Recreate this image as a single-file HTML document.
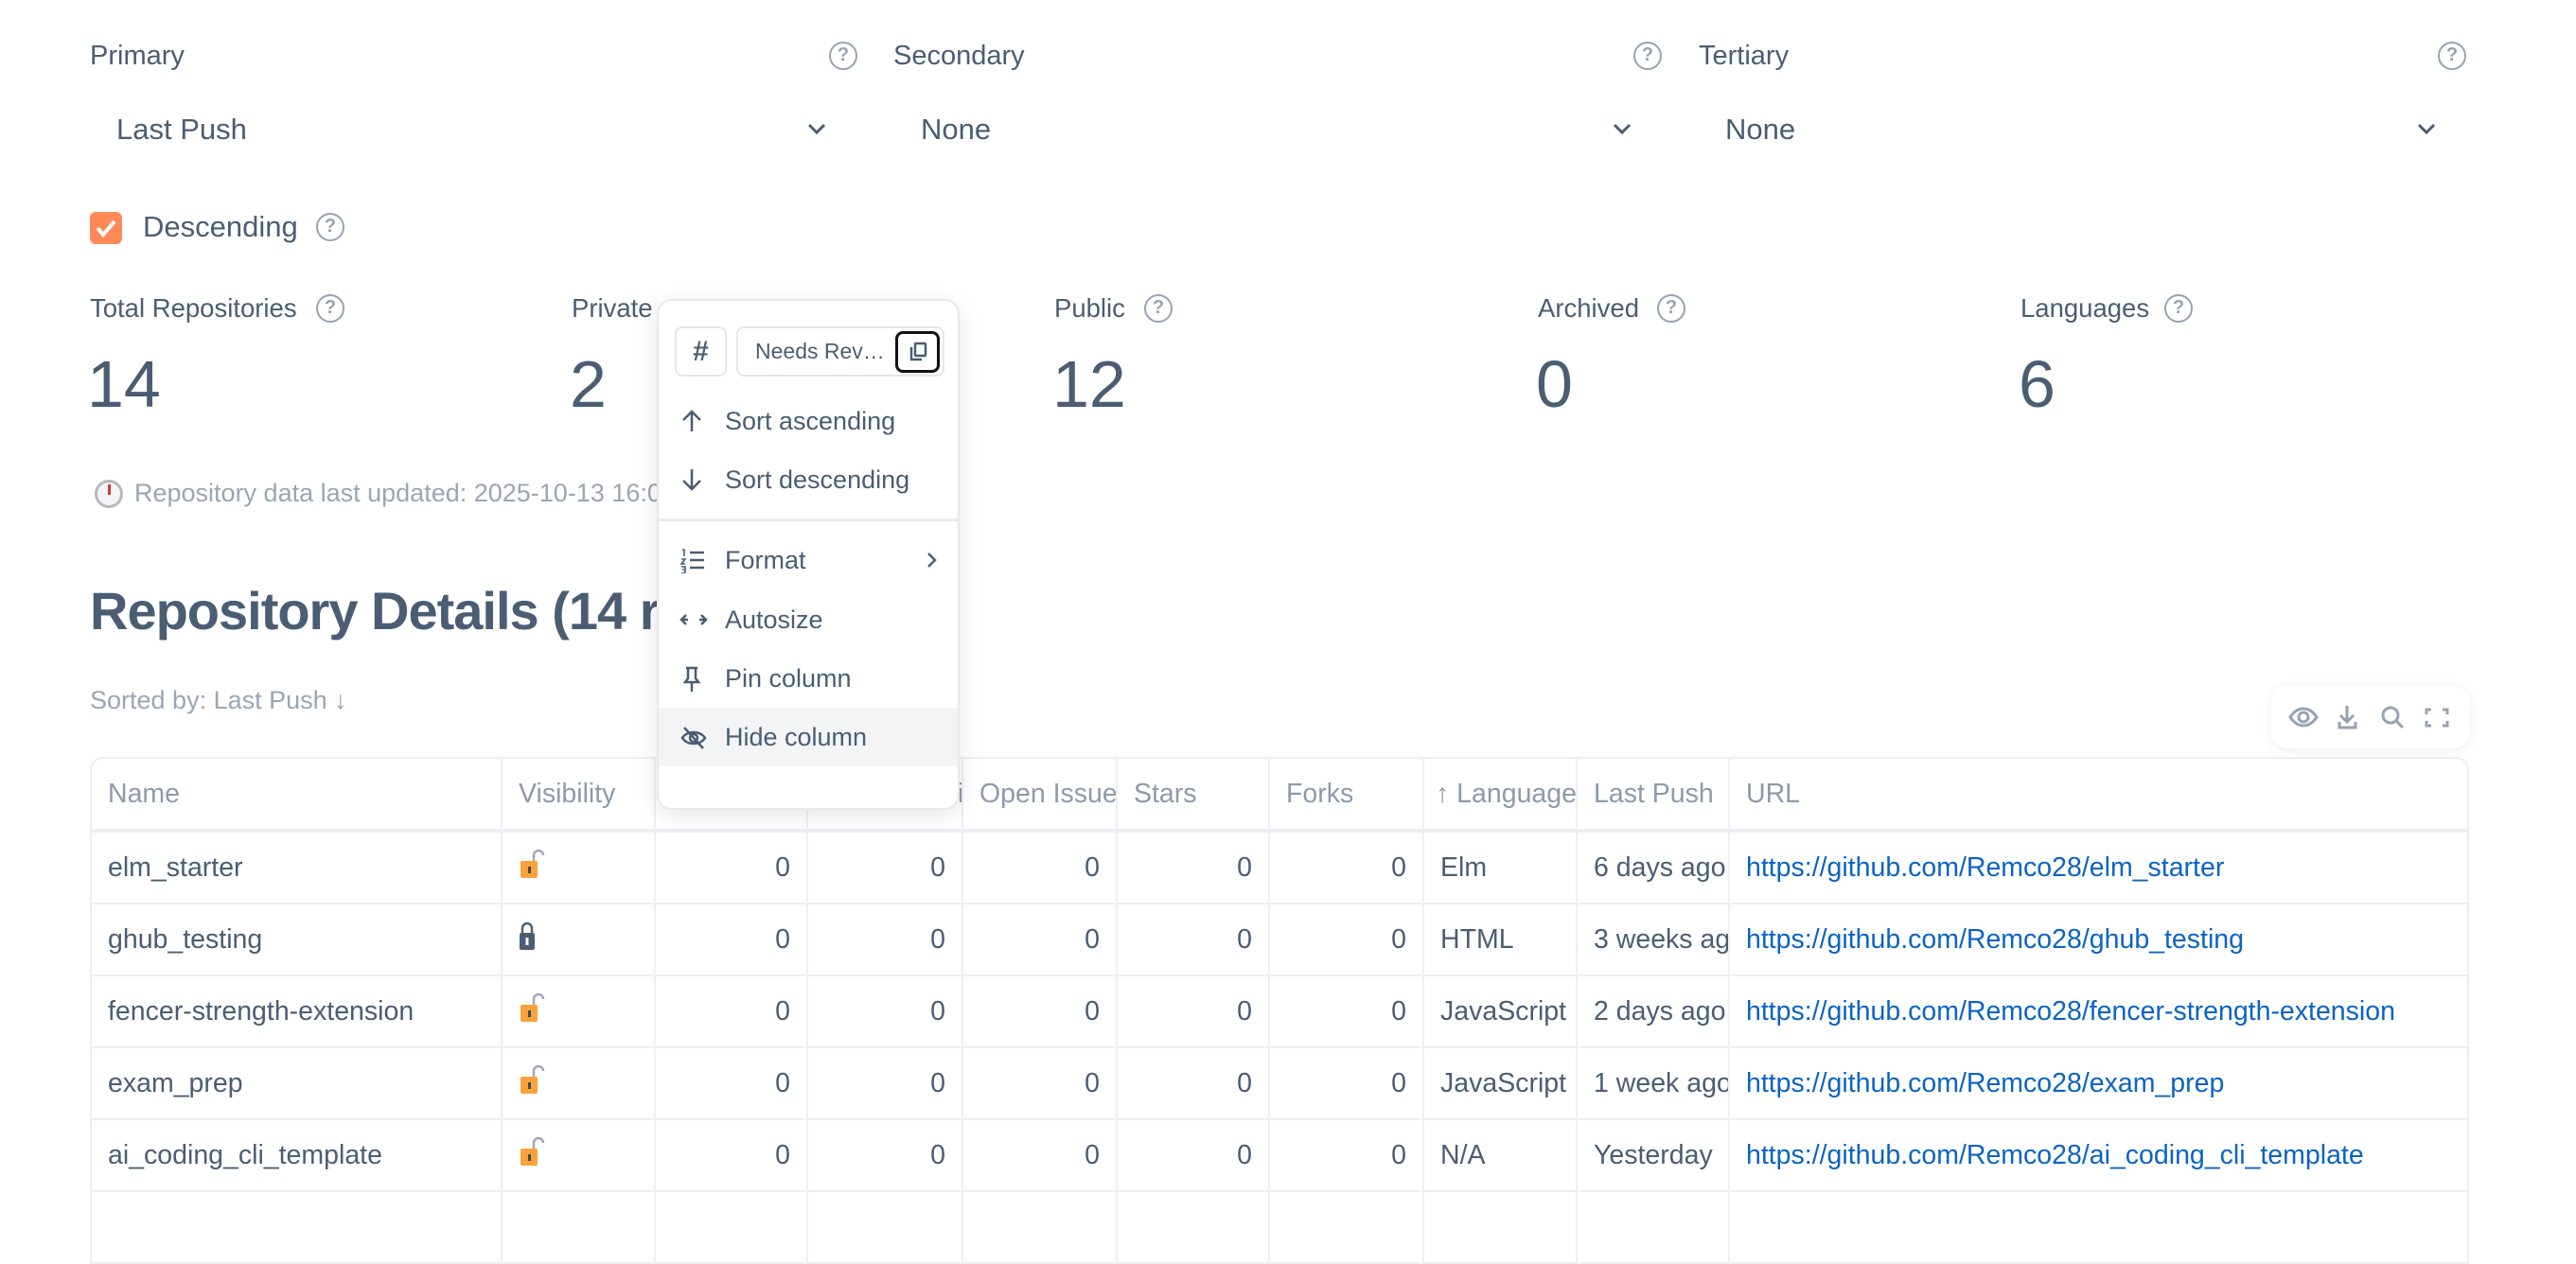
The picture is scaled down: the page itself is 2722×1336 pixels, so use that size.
<!DOCTYPE html>
<html><head><meta charset="utf-8">
<style>
*{box-sizing:border-box;margin:0;padding:0}
body{width:2722px;height:1266px;overflow:hidden;background:#fff;font-family:"Liberation Sans",sans-serif;color:#4b5d73;position:relative}
.a{position:absolute;white-space:nowrap}
.lbl{font-size:29px;line-height:34px;color:#4b5d73}
.sel{font-size:31px;line-height:40px;color:#4b5d73}
.help{position:absolute;width:30px;height:30px;border:2.5px solid #97a3b2;border-radius:50%;color:#97a3b2;font-size:20px;font-weight:bold;text-align:center;line-height:25px}
.statl{font-size:27.5px;line-height:34px;color:#4b5d73}
.statn{font-size:70px;line-height:80px;color:#4b5d73}
table{position:absolute;left:95px;top:800px;border-collapse:separate;border-spacing:0;table-layout:fixed;width:2514px;border:2px solid #eceef1;border-radius:14px 14px 0 0;border-bottom:none;font-size:28.5px}
td,th{border-right:2px solid #eef0f3;border-bottom:2px solid #eceef1;padding:0 17px;height:76px;white-space:nowrap;overflow:hidden;text-align:left;font-weight:normal;color:#4b5d73}
th{height:78px;color:#8d9aab;border-bottom:4px solid #eceef1}
td:last-child,th:last-child{border-right:none}
td.n{text-align:right}
td a{color:#0b63c5;text-decoration:none}
.menu{position:absolute;left:694px;top:316px;width:320px;height:540px;background:#fff;border:2px solid #e6e9ed;border-radius:16px;box-shadow:0 6px 24px rgba(0,0,0,.10);overflow:hidden}
.mi{position:absolute;left:0;width:100%;height:62px;font-size:27px;line-height:62px;color:#4b5d73}
.mi span{position:absolute;left:70px}
.mi svg{position:absolute;left:22px;top:17px}
</style></head><body>

<div class="a lbl" style="left:95px;top:42px">Primary</div>
<div class="help" style="left:876px;top:44px">?</div>
<div class="a sel" style="left:123px;top:117px">Last Push</div>
<svg class="a" style="left:852px;top:128px" width="22" height="16" viewBox="0 0 22 16"><path d="M3 4l8 8 8-8" fill="none" stroke="#4b5d73" stroke-width="3"/></svg>

<div class="a lbl" style="left:944px;top:42px">Secondary</div>
<div class="help" style="left:1726px;top:44px">?</div>
<div class="a sel" style="left:973px;top:117px">None</div>
<svg class="a" style="left:1703px;top:128px" width="22" height="16" viewBox="0 0 22 16"><path d="M3 4l8 8 8-8" fill="none" stroke="#4b5d73" stroke-width="3"/></svg>

<div class="a lbl" style="left:1795px;top:42px">Tertiary</div>
<div class="help" style="left:2576px;top:44px">?</div>
<div class="a sel" style="left:1823px;top:117px">None</div>
<svg class="a" style="left:2553px;top:128px" width="22" height="16" viewBox="0 0 22 16"><path d="M3 4l8 8 8-8" fill="none" stroke="#4b5d73" stroke-width="3"/></svg>

<div class="a" style="left:95px;top:224px;width:34px;height:34px;background:#ff8a57;border-radius:6px"></div>
<svg class="a" style="left:95px;top:224px" width="34" height="34"><path d="M8 17l6 7 12-14" fill="none" stroke="#fff" stroke-width="4"/></svg>
<div class="a sel" style="left:151px;top:220px">Descending</div>
<div class="help" style="left:334px;top:225px">?</div>

<div class="a statl" style="left:95px;top:309px">Total Repositories</div>
<div class="help" style="left:334px;top:311px">?</div>
<div class="a statn" style="left:92px;top:366px">14</div>
<div class="a statl" style="left:604px;top:309px">Private</div>
<div class="a statn" style="left:602px;top:366px">2</div>
<div class="a statl" style="left:1114px;top:309px">Public</div>
<div class="help" style="left:1209px;top:311px">?</div>
<div class="a statn" style="left:1112px;top:366px">12</div>
<div class="a statl" style="left:1625px;top:309px">Archived</div>
<div class="help" style="left:1751px;top:311px">?</div>
<div class="a statn" style="left:1623px;top:366px">0</div>
<div class="a statl" style="left:2135px;top:309px">Languages</div>
<div class="help" style="left:2287px;top:311px">?</div>
<div class="a statn" style="left:2133px;top:366px">6</div>

<div class="a" style="left:100px;top:507px;width:30px;height:30px;border:3px solid #b9b9bd;border-radius:50%;background:#f4f4f6"></div>
<div class="a" style="left:114px;top:512px;width:3px;height:11px;background:#d03a3a"></div>
<div class="a" style="left:142px;top:504px;font-size:27px;line-height:34px;color:#9aa5b4">Repository data last updated: 2025-10-13 16:00</div>

<div class="a" style="left:95px;top:612px;font-size:56px;line-height:68px;font-weight:bold;color:#4b5d73;letter-spacing:-1px">Repository Details (14 repositories)</div>
<div class="a" style="left:95px;top:724px;font-size:27px;line-height:32px;color:#9aa5b4">Sorted by: Last Push ↓</div>

<div class="a" style="left:2400px;top:725px;width:210px;height:66px;background:#fff;border-radius:18px;box-shadow:0 2px 12px rgba(0,0,0,.08)"></div>
<svg class="a" style="left:2400px;top:725px" width="210" height="66" viewBox="0 0 210 66" fill="none" stroke="#97a3b2" stroke-width="3">
<path d="M20 33c8-12 20-12 28 0c-8 12-20 12-28 0z"/><circle cx="34" cy="33" r="5"/>
<path d="M80 21v16M73 31l7 7 7-7M72 38v6h17v-6"/>
<circle cx="126" cy="31" r="8"/><path d="M132 37l7 7"/>
<path d="M169 25h-5v5M181 25h5v5M169 42h-5v-5M181 42h5v-5"/>
</svg>

<table>
<colgroup><col style="width:434px"><col style="width:162px"><col style="width:161px"><col style="width:164px"><col style="width:163px"><col style="width:161px"><col style="width:163px"><col style="width:162px"><col style="width:161px"><col></colgroup>
<tr><th>Name</th><th>Visibility</th><th>Stars</th><th>Needs Review</th><th>Open Issues</th><th>Stars</th><th>Forks</th><th style="padding-left:12px">↑ Language</th><th>Last Push</th><th>URL</th></tr>
<tr><td>elm_starter</td><td><svg width="30" height="32" viewBox="0 0 30 32"><path d="M16 14V7a5 5 0 0 1 10 0" fill="none" stroke="#a8a4b8" stroke-width="2.5"/><rect x="2" y="13" width="18" height="18" rx="2" fill="#f7a23a"/><rect x="10" y="19" width="3" height="7" fill="#3d4a5c"/></svg></td><td class="n">0</td><td class="n">0</td><td class="n">0</td><td class="n">0</td><td class="n">0</td><td>Elm</td><td>6 days ago</td><td><a>https://github.com/Remco28/elm_starter</a></td></tr>
<tr><td>ghub_testing</td><td><svg width="30" height="32" viewBox="0 0 30 32"><path d="M4 14V8a5 5 0 0 1 10 0v6" fill="none" stroke="#4b5d73" stroke-width="2.5"/><rect x="1" y="13" width="16" height="18" rx="2" fill="#4b5d73"/><rect x="7.5" y="18" width="3" height="8" fill="#fff"/></svg></td><td class="n">0</td><td class="n">0</td><td class="n">0</td><td class="n">0</td><td class="n">0</td><td>HTML</td><td>3 weeks ago</td><td><a>https://github.com/Remco28/ghub_testing</a></td></tr>
<tr><td>fencer-strength-extension</td><td><svg width="30" height="32" viewBox="0 0 30 32"><path d="M16 14V7a5 5 0 0 1 10 0" fill="none" stroke="#a8a4b8" stroke-width="2.5"/><rect x="2" y="13" width="18" height="18" rx="2" fill="#f7a23a"/><rect x="10" y="19" width="3" height="7" fill="#3d4a5c"/></svg></td><td class="n">0</td><td class="n">0</td><td class="n">0</td><td class="n">0</td><td class="n">0</td><td>JavaScript</td><td>2 days ago</td><td><a>https://github.com/Remco28/fencer-strength-extension</a></td></tr>
<tr><td>exam_prep</td><td><svg width="30" height="32" viewBox="0 0 30 32"><path d="M16 14V7a5 5 0 0 1 10 0" fill="none" stroke="#a8a4b8" stroke-width="2.5"/><rect x="2" y="13" width="18" height="18" rx="2" fill="#f7a23a"/><rect x="10" y="19" width="3" height="7" fill="#3d4a5c"/></svg></td><td class="n">0</td><td class="n">0</td><td class="n">0</td><td class="n">0</td><td class="n">0</td><td>JavaScript</td><td>1 week ago</td><td><a>https://github.com/Remco28/exam_prep</a></td></tr>
<tr><td>ai_coding_cli_template</td><td><svg width="30" height="32" viewBox="0 0 30 32"><path d="M16 14V7a5 5 0 0 1 10 0" fill="none" stroke="#a8a4b8" stroke-width="2.5"/><rect x="2" y="13" width="18" height="18" rx="2" fill="#f7a23a"/><rect x="10" y="19" width="3" height="7" fill="#3d4a5c"/></svg></td><td class="n">0</td><td class="n">0</td><td class="n">0</td><td class="n">0</td><td class="n">0</td><td>N/A</td><td>Yesterday</td><td><a>https://github.com/Remco28/ai_coding_cli_template</a></td></tr>
<tr><td>&nbsp;</td><td></td><td></td><td></td><td></td><td></td><td></td><td></td><td></td><td></td></tr>
</table>

<div class="menu">
 <div class="a" style="left:17px;top:27px;width:55px;height:53px;border:2px solid #e3e7ec;border-radius:8px;text-align:center;line-height:49px;font-size:30px;font-weight:bold;color:#4b5d73">#</div>
 <div class="a" style="left:82px;top:27px;width:220px;height:53px;border:2px solid #e3e7ec;border-radius:8px;font-size:23px;line-height:49px;padding-left:18px;color:#4b5d73">Needs Rev…</div>
 <div class="a" style="left:250px;top:32px;width:47px;height:44px;border:3px solid #111;border-radius:8px"></div>
 <svg class="a" style="left:262px;top:42px" width="24" height="24" viewBox="0 0 24 24" fill="none" stroke="#4b5d73" stroke-width="2.5"><rect x="9" y="3" width="11" height="13" rx="1"/><path d="M5 7v13h11"/></svg>
 <div class="mi" style="top:96px"><svg width="26" height="28" viewBox="0 0 26 28" fill="none" stroke="#4b5d73" stroke-width="2.5"><path d="M13 25V4M4 13l9-9 9 9"/></svg><span>Sort ascending</span></div>
 <div class="mi" style="top:158px"><svg width="26" height="28" viewBox="0 0 26 28" fill="none" stroke="#4b5d73" stroke-width="2.5"><path d="M13 3v21M4 15l9 9 9-9"/></svg><span>Sort descending</span></div>
 <div class="a" style="left:0;top:230px;width:100%;height:3px;background:#e6e9ed"></div>
 <div class="mi" style="top:243px"><svg width="28" height="28" viewBox="0 0 28 28" fill="none" stroke="#4b5d73" stroke-width="2.5"><path d="M11 6h15M11 14h15M11 22h15"/><path d="M3 3h2v7M2 13h4l-4 5h4M2 21h4v7H2M3 24h3" stroke-width="1.6"/></svg><span>Format</span><svg style="left:282px;top:22px" width="12" height="18" viewBox="0 0 12 18" fill="none" stroke="#4b5d73" stroke-width="2.5"><path d="M3 2l7 7-7 7"/></svg></div>
 <div class="mi" style="top:306px"><svg width="30" height="28" viewBox="0 0 30 28" fill="none" stroke="#4b5d73" stroke-width="2.5"><path d="M3 14h6M21 14h6M7 9l-5 5 5 5M23 9l5 5-5 5"/></svg><span>Autosize</span></div>
 <div class="mi" style="top:368px"><svg width="26" height="30" viewBox="0 0 26 30" fill="none" stroke="#4b5d73" stroke-width="2.5"><path d="M7 3h12M9 3v11l-3 4h14l-3-4V3M13 18v10"/></svg><span>Pin column</span></div>
 <div class="mi" style="top:430px;background:#f3f4f6"><svg width="30" height="30" viewBox="0 0 30 30" fill="none" stroke="#4b5d73" stroke-width="2.5"><path d="M3 15c5-8 19-8 24 0c-5 8-19 8-24 0z"/><circle cx="15" cy="15" r="4"/><path d="M5 4l20 22"/></svg><span>Hide column</span></div>
</div>

</body></html>
